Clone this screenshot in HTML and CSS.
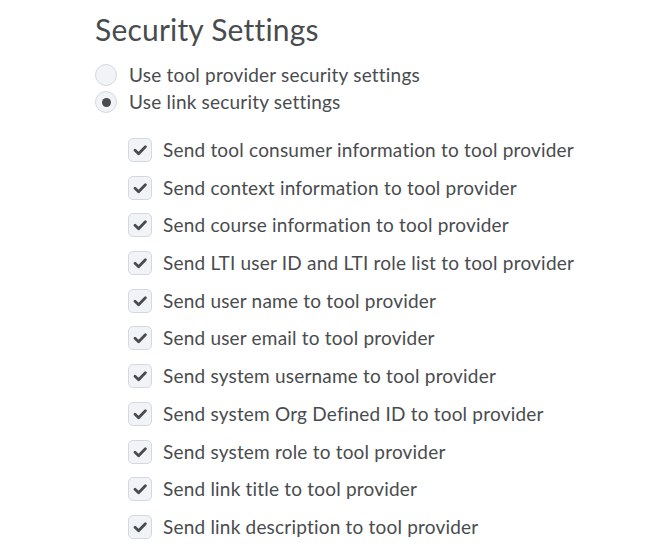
FILE: index.html
```html
<!DOCTYPE html>
<html>
<head>
<meta charset="utf-8">
<link rel="stylesheet" href="styles.css">
</head>
<body>
<div class="page">
  <h2 class="title">Security Settings</h2>
  <div class="radios">
    <label class="radio-row"><span class="radio"></span><span>Use tool provider security settings</span></label>
    <label class="radio-row"><span class="radio checked"></span><span>Use link security settings</span></label>
  </div>
  <ul class="checks">
    <li class="check-row"><span class="box"><svg viewBox="0 0 22 22"><path d="M6 11.2l3.6 3.5 6.8-7"/></svg></span><span>Send tool consumer information to tool provider</span></li>
    <li class="check-row"><span class="box"><svg viewBox="0 0 22 22"><path d="M6 11.2l3.6 3.5 6.8-7"/></svg></span><span>Send context information to tool provider</span></li>
    <li class="check-row"><span class="box"><svg viewBox="0 0 22 22"><path d="M6 11.2l3.6 3.5 6.8-7"/></svg></span><span>Send course information to tool provider</span></li>
    <li class="check-row"><span class="box"><svg viewBox="0 0 22 22"><path d="M6 11.2l3.6 3.5 6.8-7"/></svg></span><span>Send LTI user ID and LTI role list to tool provider</span></li>
    <li class="check-row"><span class="box"><svg viewBox="0 0 22 22"><path d="M6 11.2l3.6 3.5 6.8-7"/></svg></span><span>Send user name to tool provider</span></li>
    <li class="check-row"><span class="box"><svg viewBox="0 0 22 22"><path d="M6 11.2l3.6 3.5 6.8-7"/></svg></span><span>Send user email to tool provider</span></li>
    <li class="check-row"><span class="box"><svg viewBox="0 0 22 22"><path d="M6 11.2l3.6 3.5 6.8-7"/></svg></span><span>Send system username to tool provider</span></li>
    <li class="check-row"><span class="box"><svg viewBox="0 0 22 22"><path d="M6 11.2l3.6 3.5 6.8-7"/></svg></span><span>Send system Org Defined ID to tool provider</span></li>
    <li class="check-row"><span class="box"><svg viewBox="0 0 22 22"><path d="M6 11.2l3.6 3.5 6.8-7"/></svg></span><span>Send system role to tool provider</span></li>
    <li class="check-row"><span class="box"><svg viewBox="0 0 22 22"><path d="M6 11.2l3.6 3.5 6.8-7"/></svg></span><span>Send link title to tool provider</span></li>
    <li class="check-row"><span class="box"><svg viewBox="0 0 22 22"><path d="M6 11.2l3.6 3.5 6.8-7"/></svg></span><span>Send link description to tool provider</span></li>
  </ul>
</div>
</body>
</html>
```
FILE: styles.css
```css
html, body {
  margin: 0;
  padding: 0;
  background: #ffffff;
}
body {
  font-family: Lato, "Noto Sans", sans-serif;
  color: #494c4e;
}
.page {
  padding: 10px 0 0 95px;
}
.title {
  margin: 0;
  font-size: 30px;
  font-weight: 400;
  letter-spacing: 0.2px;
  line-height: 38px;
}
.radios {
  margin-top: 16px;
  display: flex;
  flex-direction: column;
  gap: 5px;
}
.radio-row {
  display: flex;
  align-items: center;
  gap: 12px;
  font-size: 19px;
  letter-spacing: 0.2px;
  line-height: 22px;
}
.radio {
  flex: none;
  width: 22px;
  height: 22px;
  border: 1px solid #d3d9e3;
  border-radius: 50%;
  background: #f1f3f6;
  display: flex;
  align-items: center;
  justify-content: center;
  box-sizing: border-box;
}
.radio.checked::after {
  content: "";
  width: 9px;
  height: 9px;
  border-radius: 50%;
  background: #494c4e;
}
.checks {
  list-style: none;
  margin: 25px 0 0 0;
  padding: 0 0 0 33px;
  display: flex;
  flex-direction: column;
  gap: 13.7px;
}
.check-row {
  display: flex;
  align-items: center;
  gap: 11px;
  font-size: 19px;
  letter-spacing: 0.2px;
  line-height: 24px;
}
.box {
  flex: none;
  width: 24px;
  height: 24px;
  border: 1px solid #d3d9e3;
  border-radius: 5px;
  background: #f1f3f6;
  box-sizing: border-box;
  display: flex;
  align-items: center;
  justify-content: center;
}
.box svg {
  width: 22px;
  height: 22px;
  fill: none;
  stroke: #494c4e;
  stroke-width: 2.8;
  stroke-linecap: round;
  stroke-linejoin: round;
}
```
